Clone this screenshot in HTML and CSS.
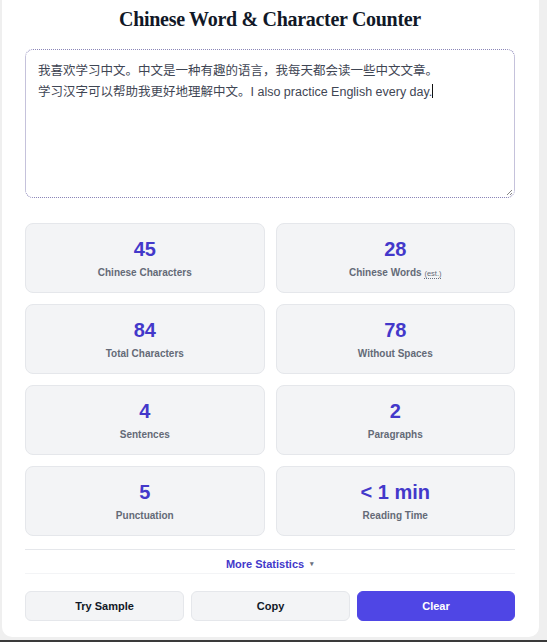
FILE: index.html
```html
<!DOCTYPE html>
<html lang="en">
<head>
<meta charset="utf-8">
<title>Chinese Word &amp; Character Counter</title>
<link rel="stylesheet" href="styles.css">
</head>
<body>
<main class="card">
  <h1 class="title">Chinese Word &amp; Character Counter</h1>
  <div class="editor">我喜欢学习中文。中文是一种有趣的语言，我每天都会读一些中文文章。<br>学习汉字可以帮助我更好地理解中文。I also practice English every day.<span class="caret"></span>
    <svg class="grip" width="8" height="8" viewBox="0 0 8 8"><path d="M7 2 L2 7 M7 5 L5 7" stroke="#888" stroke-width="1"/></svg>
  </div>
  <section class="stats">
    <div class="stat"><div class="num">45</div><div class="label">Chinese Characters</div></div>
    <div class="stat"><div class="num">28</div><div class="label">Chinese Words <span class="est">(est.)</span></div></div>
    <div class="stat"><div class="num">84</div><div class="label">Total Characters</div></div>
    <div class="stat"><div class="num">78</div><div class="label">Without Spaces</div></div>
    <div class="stat"><div class="num">4</div><div class="label">Sentences</div></div>
    <div class="stat"><div class="num">2</div><div class="label">Paragraphs</div></div>
    <div class="stat"><div class="num">5</div><div class="label">Punctuation</div></div>
    <div class="stat"><div class="num">&lt; 1 min</div><div class="label">Reading Time</div></div>
  </section>
  <div class="more"><span>More Statistics</span><span class="arrow">▾</span></div>
  <div class="actions">
    <button class="btn">Try Sample</button>
    <button class="btn">Copy</button>
    <button class="btn primary">Clear</button>
  </div>
</main>
<div class="bottom-strip"></div>
</body>
</html>
```
FILE: styles.css
```css
html, body {
  margin: 0;
  padding: 0;
}
body {
  background: #efefef;
  font-family: "Liberation Sans", Arial, "Noto Sans CJK SC", sans-serif;
  padding: 0 8px 0 2px;
  height: 642px;
  box-sizing: border-box;
  display: flex;
  flex-direction: column;
}
.card {
  background: #ffffff;
  border-radius: 0 0 10px 10px;
  padding: 5px 24px 17px 23px;
  box-sizing: border-box;
  height: 637px;
}
.title {
  margin: 0 0 16px;
  font-family: "Liberation Serif", "Times New Roman", serif;
  font-weight: 700;
  font-size: 20px;
  line-height: 28px;
  color: #111827;
  text-align: center;
  letter-spacing: -0.3px;
}
.editor {
  position: relative;
  height: 149px;
  box-sizing: border-box;
  border: 1px dotted #8b86b8;
  border-radius: 8px;
  padding: 11px 12px;
  font-family: "Liberation Sans", Arial, "Noto Sans CJK SC", sans-serif;
  font-size: 12.5px;
  line-height: 21px;
  color: #3f4654;
}
.caret {
  display: inline-block;
  width: 1px;
  height: 14px;
  background: #111;
  vertical-align: -2px;
}
.grip {
  position: absolute;
  right: 1px;
  bottom: 1px;
}
.stats {
  margin-top: 25px;
  display: grid;
  grid-template-columns: 1fr 1fr;
  gap: 11px;
}
.stat {
  height: 70px;
  box-sizing: border-box;
  background: #f3f4f6;
  border: 1px solid #e5e7eb;
  border-radius: 8px;
  display: flex;
  flex-direction: column;
  align-items: center;
  padding-top: 13px;
}
.num {
  font-size: 20px;
  font-weight: 700;
  line-height: 24px;
  color: #4338ca;
}
.label {
  margin-top: 5px;
  font-size: 10px;
  font-weight: 700;
  color: #646a77;
  line-height: 14px;
}
.est {
  font-size: 7.5px;
  font-weight: 400;
  border-bottom: 1px dotted #6b7280;
}
.more {
  margin-top: 13px;
  height: 25px;
  box-sizing: border-box;
  border-top: 1px solid #e5e7eb;
  border-bottom: 1px solid #f3f4f6;
  display: flex;
  align-items: center;
  justify-content: center;
  gap: 6px;
  padding-top: 4px;
  font-size: 11px;
  font-weight: 700;
  color: #4338ca;
}
.arrow {
  font-size: 7px;
  color: #6b7280;
}
.actions {
  margin-top: 17px;
  display: grid;
  grid-template-columns: 159px 159px 1fr;
  gap: 7px;
}
.btn {
  height: 30px;
  border: 1px solid #e5e7eb;
  background: #f3f4f6;
  border-radius: 6px;
  font-family: "Liberation Sans", Arial, sans-serif;
  font-size: 11px;
  font-weight: 700;
  color: #111827;
}
.btn.primary {
  background: #4f46e5;
  border-color: #4f46e5;
  color: #ffffff;
}
.bottom-strip {
  margin-top: 3px;
  margin-left: -2px;
  margin-right: -8px;
  height: 2px;
  background: #3a3a3a;
}
```
